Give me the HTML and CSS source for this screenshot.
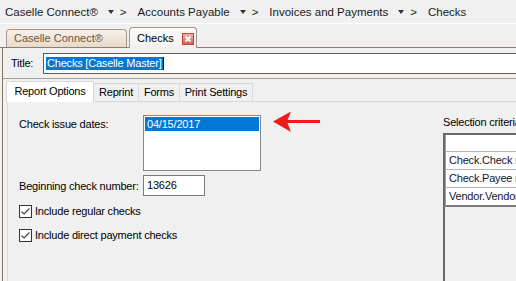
FILE: index.html
```html
<!DOCTYPE html>
<html lang="en">
<head>
    <meta charset="UTF-8">
    <title>Checks</title>
    <link rel="stylesheet" href="styles.css">
</head>
<body>
    <div class="crumbs">
        <span class="crumb">Caselle Connect®</span><span class="drop"></span><span class="sep">&gt;</span>
        <span class="crumb">Accounts Payable</span><span class="drop"></span><span class="sep">&gt;</span>
        <span class="crumb">Invoices and Payments</span><span class="drop"></span><span class="sep">&gt;</span>
        <span class="crumb">Checks</span>
    </div>

    <div class="doc-tabs">
        <div class="doc-tab">Caselle Connect®</div>
        <div class="doc-tab active">
            <span>Checks</span>
            <svg class="close" width="12" height="12" viewBox="0 0 12 12">
                <defs>
                    <linearGradient id="closeBg" x1="0" y1="0" x2="0" y2="1">
                        <stop offset="0" stop-color="#f2b4ae"/>
                        <stop offset="1" stop-color="#dc5a50"/>
                    </linearGradient>
                </defs>
                <rect x="0.5" y="0.5" width="11" height="11" fill="url(#closeBg)" stroke="#c0463c"/>
                <path d="M3.5 3.5 L8.5 8.5 M8.5 3.5 L3.5 8.5" stroke="#fff" stroke-width="1.8"/>
            </svg>
        </div>
    </div>

    <div class="doc">
        <div class="title-row">
            <label class="title-label">Title:</label>
            <div class="title-input"><span class="sel">Checks [Caselle Master]</span><span class="caret"></span></div>
        </div>

        <div class="report">
            <div class="tabs">
                <div class="tab active">Report Options</div>
                <div class="tab reprint">Reprint</div>
                <div class="tab forms">Forms</div>
                <div class="tab print">Print Settings</div>
            </div>
            <div class="panel">
                <div class="options">
                    <div class="field">
                        <span class="field-label">Check issue dates:</span>
                        <div class="listbox">
                            <div class="list-item selected">04/15/2017</div>
                        </div>
                    </div>
                    <div class="field short">
                        <span class="field-label">Beginning check number:</span>
                        <div class="textbox">13626</div>
                    </div>
                    <div class="checks">
                        <div class="check-row">
                            <svg class="checkbox" width="13" height="13" viewBox="0 0 13 13">
                                <rect x="0.5" y="0.5" width="12" height="12" fill="#fff" stroke="#333"/>
                                <path d="M2.5 6.5 L5 9 L10.5 3.5" fill="none" stroke="#444" stroke-width="1.2"/>
                            </svg>
                            <span>Include regular checks</span>
                        </div>
                        <div class="check-row">
                            <svg class="checkbox" width="13" height="13" viewBox="0 0 13 13">
                                <rect x="0.5" y="0.5" width="12" height="12" fill="#fff" stroke="#333"/>
                                <path d="M2.5 6.5 L5 9 L10.5 3.5" fill="none" stroke="#444" stroke-width="1.2"/>
                            </svg>
                            <span>Include direct payment checks</span>
                        </div>
                    </div>
                </div>
                <div class="criteria">
                    <div class="criteria-label">Selection criteria</div>
                    <div class="grid">
                        <div class="grid-head"></div>
                        <div class="grid-row">Check.Check number</div>
                        <div class="grid-row">Check.Payee name</div>
                        <div class="grid-row">Vendor.Vendor number</div>
                    </div>
                </div>
            </div>
        </div>
    </div>

    <!-- annotation arrow pointing at the date list -->
    <svg class="arrow" width="48" height="22" viewBox="0 0 48 22">
        <rect x="14" y="9" width="33" height="3" fill="#ea1c1c"/>
        <path d="M0 10.5 L18 0.5 L14 10.5 L18 21 Z" fill="#ea1c1c"/>
    </svg>
</body>
</html>
```

FILE: styles.css
```css
body {
    margin: 0;
    width: 516px;
    height: 281px;
    overflow: hidden;
    background: #f0f0f0;
    font-family: "Liberation Sans", Arial, sans-serif;
    font-size: 11px;
    color: #000;
    position: relative;
}
.crumbs {
    height: 23px;
    display: flex;
    align-items: center;
    padding-left: 5px;
    font-size: 11.5px;
    color: #1b1b1b;
    white-space: nowrap;
}
.crumb {
    margin-right: 10px;
}
.drop {
    width: 0;
    height: 0;
    border-left: 3px solid transparent;
    border-right: 3px solid transparent;
    border-top: 4px solid #333;
    margin-right: 6px;
}
.sep {
    margin-right: 11px;
}
.doc-tabs {
    height: 23px;
    border-top: 1px solid #fff;
    border-bottom: 1px solid #8f7e70;
    display: flex;
    align-items: flex-end;
    padding-left: 6px;
    gap: 2px;
}
.doc-tab {
    box-sizing: border-box;
    height: 18px;
    width: 121px;
    border: 1px solid #a8968a;
    border-bottom: none;
    border-radius: 4px 4px 0 0;
    background: linear-gradient(#f7f1ea, #e7dac9);
    color: #6e5544;
    font-size: 11px;
    padding-left: 7px;
    line-height: 17px;
}
.doc-tab.active {
    height: 21px;
    width: 68px;
    margin-bottom: -1px;
    background: linear-gradient(#fdfcfb, #f3f1ee);
    color: #000;
    display: flex;
    align-items: center;
    padding-left: 7px;
    line-height: normal;
}
.close {
    margin-left: 8px;
    margin-top: 1px;
}
.doc {
    margin-left: 2px;
    border-left: 1px solid #8c7262;
    height: 240px;
    letter-spacing: -0.2px;
}
.title-row {
    height: 30px;
    display: flex;
    align-items: center;
    padding-left: 8px;
}
.title-label {
    width: 32px;
}
.title-input {
    box-sizing: border-box;
    flex: 1;
    height: 21px;
    border: 1px solid #0078d7;
    border-right: none;
    background: #fff;
    display: flex;
    align-items: center;
    padding-left: 2px;
}
.sel {
    background: #0078d7;
    color: #fff;
    line-height: 13px;
    padding: 0 1px;
}
.caret {
    width: 1px;
    height: 13px;
    background: #000;
}
.report {
    border-top: 1px solid #a0a0a0;
}
.tabs {
    height: 22px;
    display: flex;
    align-items: flex-end;
    padding-left: 3px;
    position: relative;
    z-index: 1;
}
.tab {
    box-sizing: border-box;
    height: 18px;
    border: 1px solid #d9d9d9;
    border-bottom: none;
    border-left: none;
    background: #f0f0f0;
    line-height: 17px;
    text-align: center;
    white-space: nowrap;
}
.tab.active {
    width: 88px;
    height: 21px;
    margin-bottom: -1px;
    border-left: 1px solid #d9d9d9;
    background: #fff;
    line-height: 19px;
}
.tab.reprint {
    width: 45px;
}
.tab.forms {
    width: 41px;
}
.tab.print {
    width: 73px;
}
.panel {
    margin-left: 4px;
    border: 1px solid #d9d9d9;
    border-right: none;
    height: 200px;
    display: flex;
    padding-top: 13px;
}
.options {
    width: 424px;
    padding-left: 11px;
    flex: none;
}
.field {
    display: flex;
    align-items: flex-start;
}
.field-label {
    width: 124px;
    padding-top: 3px;
    flex: none;
    white-space: nowrap;
}
.listbox {
    box-sizing: border-box;
    width: 118px;
    height: 56px;
    border: 1px solid #828790;
    background: #fff;
    padding: 1px;
}
.list-item {
    height: 14px;
    line-height: 14px;
    padding-left: 2px;
}
.list-item.selected {
    background: #0078d7;
    color: #fff;
}
.field.short {
    margin-top: 4px;
    align-items: center;
}
.field.short .field-label {
    padding-top: 0;
}
.textbox {
    box-sizing: border-box;
    width: 62px;
    height: 21px;
    border: 1px solid #7a7a7a;
    background: #fff;
    padding-left: 3px;
    line-height: 19px;
}
.checks {
    margin-top: 3px;
}
.check-row {
    height: 24px;
    display: flex;
    align-items: center;
}
.checkbox {
    flex: none;
    margin-right: 3px;
}
.criteria {
    flex: none;
    width: 200px;
}
.criteria-label {
    line-height: 14px;
    margin-bottom: 4px;
}
.grid {
    border-left: 2px solid #6b6b6b;
    border-top: 2px solid #6b6b6b;
    height: 200px;
}
.grid-head {
    height: 16px;
    background: #fff;
    border-left: 1px solid #a0a0a0;
}
.grid-row {
    height: 17px;
    line-height: 17px;
    border-top: 1px solid #b4b4b4;
    border-left: 1px solid #a0a0a0;
    background: #fff;
    padding-left: 3px;
    color: #141432;
    white-space: nowrap;
    overflow: hidden;
}
.grid-row:last-child {
    border-bottom: 2px solid #7a7a7a;
}
.arrow {
    position: absolute;
    left: 273px;
    top: 111px;
}
```
